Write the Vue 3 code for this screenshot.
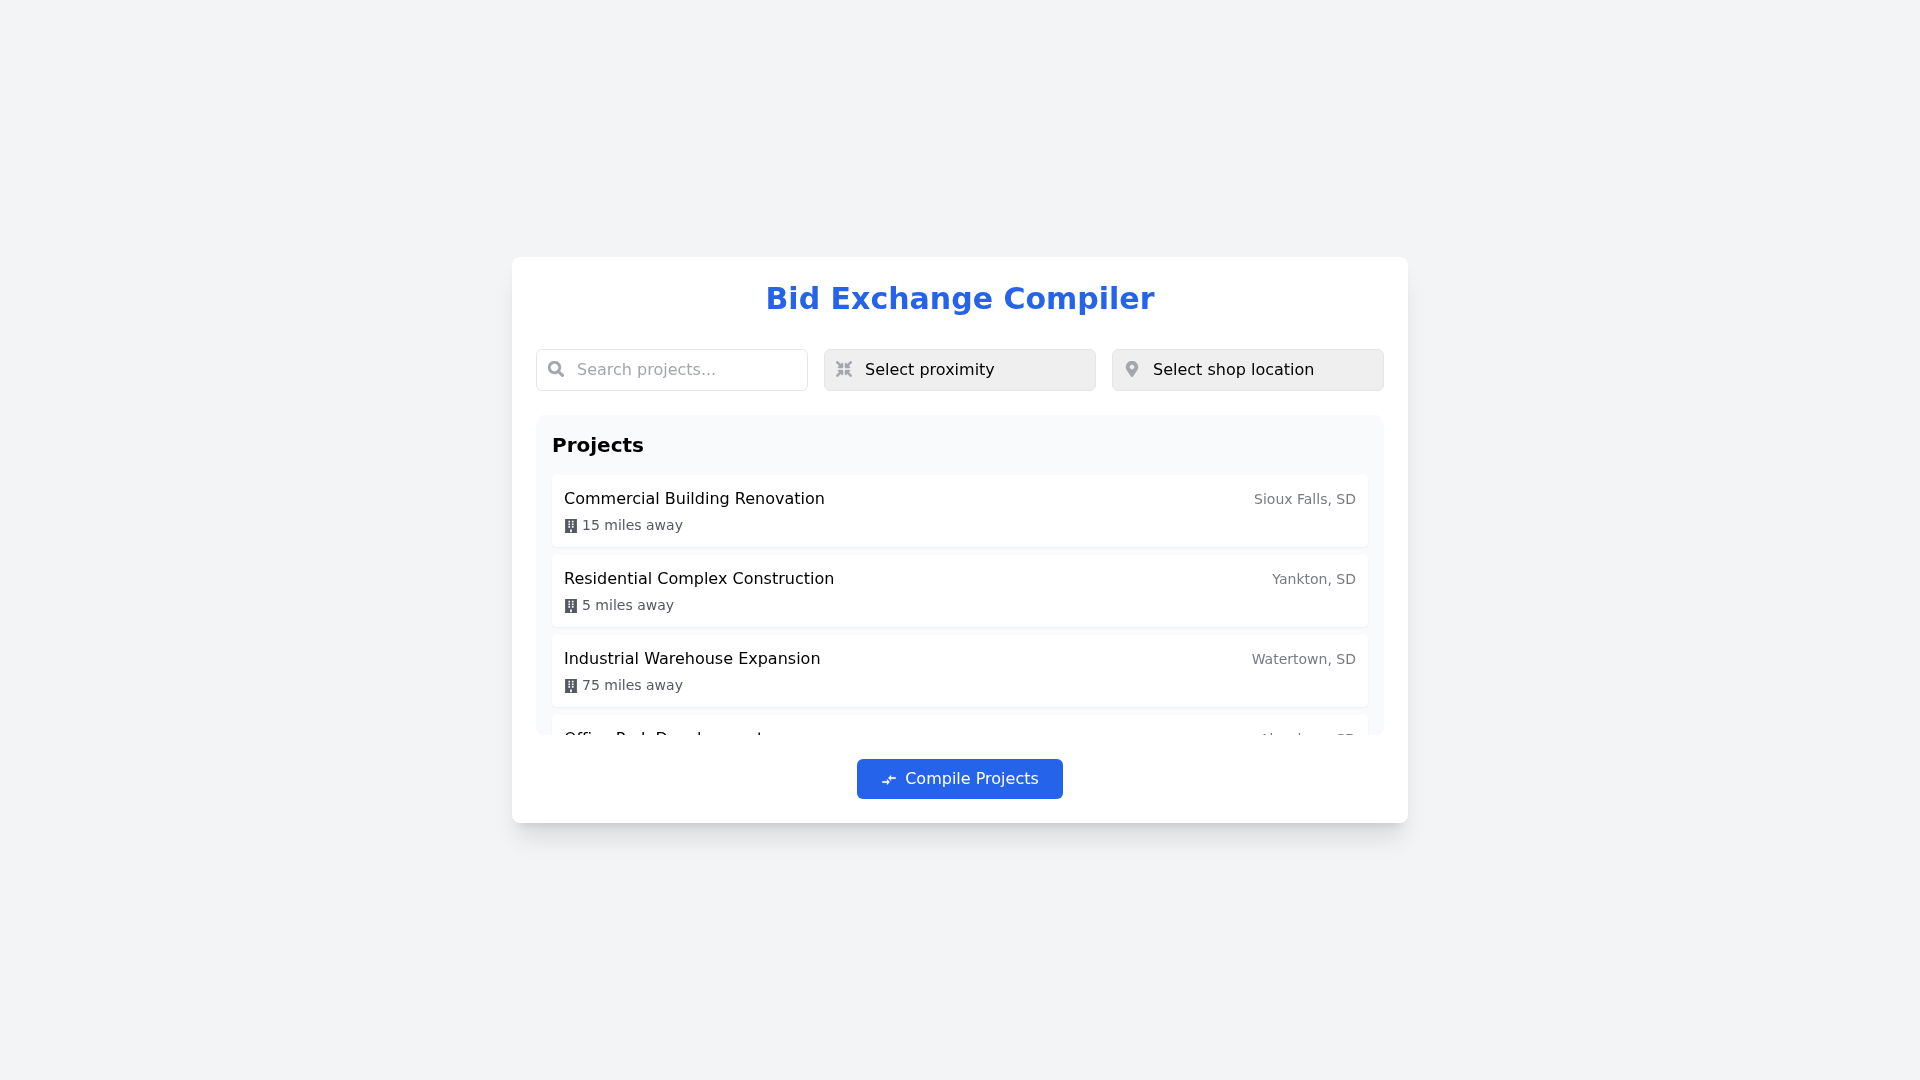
<template>
  <div class="page">
    <div class="compiler">
      <h1 class="title">Bid Exchange Compiler</h1>

      <div class="filters">
        <div class="field">
          <svg class="field-icon" viewBox="0 0 512 512"><path :d="icons.search" /></svg>
          <input v-model="search" class="control" type="text" placeholder="Search projects..." />
        </div>
        <div class="field">
          <svg class="field-icon" viewBox="0 0 512 512"><path :d="icons.compress" /></svg>
          <select v-model="proximity" class="control">
            <option value="">Select proximity</option>
            <option v-for="p in proximities" :key="p" :value="p">Within {{ p }} miles</option>
          </select>
        </div>
        <div class="field">
          <svg class="field-icon" viewBox="0 0 384 512"><path :d="icons.marker" /></svg>
          <select v-model="shop" class="control">
            <option value="">Select shop location</option>
            <option v-for="s in shops" :key="s" :value="s">{{ s }}</option>
          </select>
        </div>
      </div>

      <div class="projects">
        <h2 class="projects-title">Projects</h2>
        <ul class="project-list">
          <li v-for="project in filtered" :key="project.id" class="project">
            <div class="project-top">
              <span>{{ project.name }}</span>
              <span class="project-location">{{ project.location }}</span>
            </div>
            <div class="project-distance">
              <svg class="building" viewBox="0 0 448 512"><path :d="icons.building" fill-rule="evenodd" /></svg>{{ project.distance }} miles away
            </div>
          </li>
        </ul>
      </div>

      <div class="actions">
        <button class="compile">
          <svg class="compare" viewBox="0 0 24 24"><path :d="icons.compare" /></svg>Compile Projects
        </button>
      </div>
    </div>
  </div>
</template>

<script setup>
import { ref, computed } from 'vue'

const search = ref('')
const proximity = ref('')
const shop = ref('')

const proximities = [10, 25, 50, 100]
const shops = ['Sioux Falls, SD', 'Yankton, SD', 'Watertown, SD', 'Aberdeen, SD']

const projects = [
  { id: 1, name: 'Commercial Building Renovation', location: 'Sioux Falls, SD', distance: 15 },
  { id: 2, name: 'Residential Complex Construction', location: 'Yankton, SD', distance: 5 },
  { id: 3, name: 'Industrial Warehouse Expansion', location: 'Watertown, SD', distance: 75 },
  { id: 4, name: 'Office Park Development', location: 'Aberdeen, SD', distance: 50 }
]

const filtered = computed(() =>
  projects.filter(p =>
    p.name.toLowerCase().includes(search.value.toLowerCase()) &&
    (!proximity.value || p.distance <= proximity.value) &&
    (!shop.value || p.location === shop.value)
  )
)

const icons = {
  search: 'M505 442.7L405.3 343c-4.5-4.5-10.6-7-17-7H372c27.6-35.3 44-79.7 44-128C416 93.1 322.9 0 208 0S0 93.1 0 208s93.1 208 208 208c48.3 0 92.7-16.4 128-44v16.3c0 6.4 2.5 12.5 7 17l99.7 99.7c9.4 9.4 24.6 9.4 33.9 0l28.3-28.3c9.4-9.4 9.4-24.6.1-34zM208 336c-70.7 0-128-57.2-128-128 0-70.7 57.2-128 128-128 70.7 0 128 57.2 128 128 0 70.7-57.2 128-128 128z',
  compress: 'M200 288H88c-21.4 0-32.1 25.8-17 41l32.9 31-99.2 99.3c-6.2 6.2-6.2 16.4 0 22.6l25.4 25.4c6.2 6.2 16.4 6.2 22.6 0L152 408l31.1 33c15.1 15.1 40.9 4.4 40.9-17V312c0-13.3-10.7-24-24-24zm112-64h112c21.4 0 32.1-25.9 17-41l-33-31 99.3-99.3c6.2-6.2 6.2-16.4 0-22.6L481.9 4.7c-6.2-6.2-16.4-6.2-22.6 0L360 104l-31.1-33C313.8 55.9 288 66.6 288 88v112c0 13.3 10.7 24 24 24zm96 136l33-31.1c15.1-15.1 4.4-40.9-17-40.9H312c-13.3 0-24 10.7-24 24v112c0 21.4 25.9 32.1 41 17l31-32.9 99.3 99.3c6.2 6.2 16.4 6.2 22.6 0l25.4-25.4c6.2-6.2 6.2-16.4 0-22.6L408 360zM183 71.1L152 104 52.7 4.7c-6.2-6.2-16.4-6.2-22.6 0L4.7 30.1c-6.2 6.2-6.2 16.4 0 22.6L104 152l-33 31.1C55.9 198.2 66.6 224 88 224h112c13.3 0 24-10.7 24-24V88c0-21.3-25.9-32-41-16.9z',
  marker: 'M172.268 501.67C26.97 291.031 0 269.413 0 192 0 85.961 85.961 0 192 0s192 85.961 192 192c0 77.413-26.97 99.031-172.268 309.67-9.535 13.774-29.93 13.773-39.464 0zM192 272c44.183 0 80-35.817 80-80s-35.817-80-80-80-80 35.817-80 80 35.817 80 80 80z',
  building: 'M448 512v-20c0-4-3-7-8-8V12c0-6-5-12-12-12H20C13 0 8 6 8 12v472c-5 1-8 4-8 8v20zM128 76c0-6.627 5.373-12 12-12h40c6.627 0 12 5.373 12 12v40c0 6.627-5.373 12-12 12h-40c-6.627 0-12-5.373-12-12V76zm0 96c0-6.627 5.373-12 12-12h40c6.627 0 12 5.373 12 12v40c0 6.627-5.373 12-12 12h-40c-6.627 0-12-5.373-12-12v-40zm52 148h-40c-6.627 0-12-5.373-12-12v-40c0-6.627 5.373-12 12-12h40c6.627 0 12 5.373 12 12v40c0 6.627-5.373 12-12 12zm76 160h-64v-84c0-6.627 5.373-12 12-12h40c6.627 0 12 5.373 12 12v84zm64-172c0 6.627-5.373 12-12 12h-40c-6.627 0-12-5.373-12-12v-40c0-6.627 5.373-12 12-12h40c6.627 0 12 5.373 12 12v40zm0-96c0 6.627-5.373 12-12 12h-40c-6.627 0-12-5.373-12-12v-40c0-6.627 5.373-12 12-12h40c6.627 0 12 5.373 12 12v40zm0-96c0 6.627-5.373 12-12 12h-40c-6.627 0-12-5.373-12-12V76c0-6.627 5.373-12 12-12h40c6.627 0 12 5.373 12 12v40z',
  compare: 'M9.01 14H2v2h7.01v3L13 15l-3.99-4v3zm5.98-1v-3H22V8h-7.01V5L11 9l3.99 4z'
}
</script>

<style>
body{margin:0}
</style>

<style scoped>
*{box-sizing:border-box}
.page{min-height:100vh;display:flex;align-items:center;justify-content:center;background:#f3f4f6;font-family:"DejaVu Sans",sans-serif;font-size:16px;line-height:24px;color:#000}
.compiler{width:896px;padding:24px;background:#fff;border-radius:8px;box-shadow:0 20px 25px -5px rgba(0,0,0,.1),0 8px 10px -6px rgba(0,0,0,.1)}
.title{margin:0 0 32px;font-size:30px;line-height:36px;font-weight:700;text-align:center;color:#2563eb}
.filters{display:grid;grid-template-columns:repeat(3,1fr);gap:16px;margin-bottom:24px}
.field{position:relative}
.field-icon{position:absolute;top:12px;left:12px;width:16px;height:16px;fill:#a3a6ad;stroke:#a3a6ad;stroke-width:14}
.control{display:block;width:100%;height:42px;margin:0;padding:8px 16px 8px 40px;border:1px solid #e4e5e7;border-radius:6px;font:inherit;color:#000;appearance:none;outline:none}
input.control{padding-top:7px;padding-bottom:9px}
select.control{background:#efefef}
.control::placeholder{color:#a3a6ad;opacity:1}
.projects{height:320px;padding:16px;overflow-y:auto;scrollbar-width:none;background:#f9fafb;border-radius:8px}
.projects-title{margin:0 0 16px;font-size:20px;line-height:28px;font-weight:600}
.project-list{display:flex;flex-direction:column;gap:8px;margin:0;padding:0;list-style:none}
.project{padding:12px;background:#fff;border-radius:4px;box-shadow:0 1px 2px rgba(0,0,0,.05)}
.project-top{display:flex;justify-content:space-between;align-items:center}
.project-location{font-size:14px;line-height:20px;color:#787a82}
.project-distance{margin-top:4px;font-size:14px;line-height:20px;color:#545860}
.building{width:14px;height:14px;margin-right:4px;vertical-align:middle;fill:currentColor}
.actions{display:flex;justify-content:center;margin-top:24px}
.compile{padding:8px 24px;border:0;border-radius:6px;background:#2563eb;color:#fff;font:inherit;cursor:pointer}
.compare{width:16px;height:16px;margin-right:8px;vertical-align:middle;fill:currentColor;stroke:currentColor;stroke-width:.5}
</style>
